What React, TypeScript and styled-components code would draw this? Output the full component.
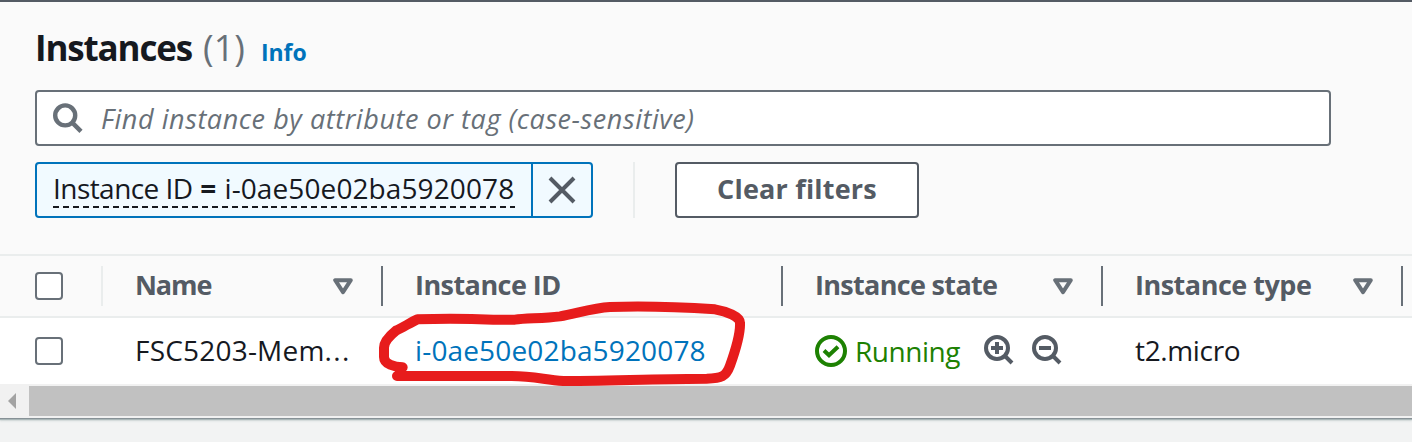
import React from "react";
import styled, { createGlobalStyle, css } from "styled-components";

const color = {
  ink: "#16191f",
  slate: "#545b64",
  grey: "#687078",
  blue: "#0073bb",
  green: "#1d8102",
  line: "#eaeded",
};

const Global = createGlobalStyle`
  * { box-sizing: border-box; }
  body {
    margin: 0;
    background: #f2f3f3;
    font-family: "Open Sans", "Noto Sans", sans-serif;
    font-size: 28px;
    color: ${color.ink};
    overflow: hidden;
  }
`;

const Page = styled.div`
  position: relative;
  width: 1412px;
  height: 442px;
  overflow: hidden;
`;

const Panel = styled.section`
  background: #fafafa;
  border-top: 2px solid ${color.slate};
  border-bottom: 1px solid #879196;
  box-shadow: 0 1px 1px #aab7b8, 0 2px 2px #d5dbdb;
`;

const Label = styled.span<{ $track?: number }>`
  white-space: nowrap;
  letter-spacing: ${(p) => p.$track ?? 0}px;
`;

const Toolbar = styled.header`
  height: 252px;
  padding: 22px 35px 0;
`;

const Heading = styled.div`
  display: flex;
  align-items: baseline;
  height: 66px;
  line-height: 48px;
`;

const Title = styled.h2`
  margin: 0;
  font-size: 35px;
  font-weight: 700;
`;

const Count = styled.span`
  margin-left: 11px;
  font-size: 36px;
  color: ${color.grey};
`;

const InfoLink = styled.a`
  margin-left: 16px;
  font-size: 23px;
  font-weight: 700;
  color: ${color.blue};
`;

const SearchBox = styled.div`
  display: flex;
  align-items: center;
  gap: 18px;
  width: 1296px;
  height: 56px;
  padding: 0 16px;
  border: 2px solid ${color.grey};
  border-radius: 4px;
  background: #fff;
  color: ${color.grey};
  font-size: 27px;
  font-style: italic;
`;

const Filters = styled.div`
  display: flex;
  height: 56px;
  margin-top: 16px;
`;

const Token = styled.div`
  display: flex;
  width: 558px;
  border: 2px solid ${color.blue};
  border-radius: 4px;
  background: #f1faff;
`;

const TokenText = styled.div`
  display: flex;
  width: 494px;
  padding: 7px 0 0 16px;
`;

const Dashed = styled.div`
  width: 462px;
  height: 37px;
  line-height: 35px;
  white-space: nowrap;
  background: repeating-linear-gradient(
      90deg,
      ${color.ink} 0 6px,
      transparent 6px 9.93px
    )
    left bottom / 100% 2px no-repeat;
`;

const Operator = styled.span`
  margin: 0 2px 0 1px;
  font-weight: 700;
`;

const Dismiss = styled.button`
  display: flex;
  align-items: center;
  justify-content: center;
  flex: 1;
  padding: 0;
  border: 0;
  border-left: 2px solid ${color.blue};
  background: none;
`;

const Divider = styled.div`
  width: 2px;
  margin: 0 40px;
  background: ${color.line};
`;

const ClearButton = styled.button`
  width: 244px;
  padding: 0 0 3px;
  border: 2px solid ${color.slate};
  border-radius: 4px;
  background: #fff;
  font: 700 27px "Open Sans", sans-serif;
  color: ${color.slate};
`;

const Row = styled.div<{ $head?: boolean }>`
  display: grid;
  grid-template-columns: 103px 280px 400px 320px 300px 9px;
  align-items: center;
  ${(p) =>
    p.$head
      ? css`
          height: 64px;
          border-top: 2px solid ${color.line};
          border-bottom: 2px solid ${color.line};
          color: ${color.slate};
          font-size: 27px;
          font-weight: 700;
        `
      : css`
          height: 66px;
          background: #fff;
        `}
`;

const Cell = styled.div<{ $head?: boolean; $edge?: string }>`
  display: flex;
  align-items: center;
  height: 40px;
  padding: 0 28px 0 32px;
  line-height: 38px;
  border-right: 2px solid ${(p) => p.$edge ?? "transparent"};
  ${(p) => p.$head && "justify-content: space-between;"}

  > ${Label}, > a {
    padding-bottom: ${(p) => (p.$head ? 2 : 3)}px;
  }
`;

const CheckCell = styled(Cell)`
  padding: 0 0 0 35px;
`;

const Checkbox = styled.div`
  width: 28px;
  height: 28px;
  border: 2px solid ${color.grey};
  border-radius: 4px;
  background: #fff;
`;

const IdLink = styled.a`
  color: ${color.blue};
`;

const Status = styled.div`
  display: flex;
  align-items: center;
  gap: 8px;
  color: ${color.green};
`;

const ZoomGroup = styled.div`
  display: flex;
  gap: 18px;
  margin-left: 24px;
  margin-top: -3px;
`;

const Scrollbar = styled.div`
  display: flex;
  align-items: center;
  height: 34px;
  padding: 2px 0;
  background: #f1f1f1;
`;

const ScrollArrow = styled.div`
  display: flex;
  justify-content: center;
  width: 29px;
  padding-right: 5px;
`;

const Thumb = styled.div`
  flex: 1;
  height: 30px;
  background: #c1c1c1;
`;

const Marker = styled.svg`
  position: absolute;
  left: 360px;
  top: 245px;
  pointer-events: none;
`;

const SearchIcon = () => (
  <svg width="30" height="30" viewBox="0 0 30 30" fill="none" stroke={color.grey} strokeWidth="4.4">
    <circle cx="12.2" cy="12.4" r="10" />
    <path d="M19 19.4l9 9" />
  </svg>
);

const CloseIcon = () => (
  <svg width="28" height="28" viewBox="0 0 28 28" stroke={color.slate} strokeWidth="4">
    <path d="M2 2l24 24M26 2L2 26" />
  </svg>
);

const SortIcon = () => (
  <svg width="20" height="17" viewBox="0 0 20 17" fill="none" stroke={color.grey} strokeWidth="4" strokeLinejoin="round">
    <path d="M2.2 2.2h15.6L10 14.2z" />
  </svg>
);

const CheckIcon = () => (
  <svg width="32" height="32" viewBox="0 0 32 32" fill="none" stroke={color.green} strokeWidth="4">
    <circle cx="16" cy="16" r="14" />
    <path d="M9 15.5l5 4.8L23 11.8" />
  </svg>
);

const ZoomIcon = ({ plus }: { plus?: boolean }) => (
  <svg width="30" height="30" viewBox="0 0 30 30" fill="none" stroke={color.slate} strokeWidth="4">
    <circle cx="13" cy="13" r="11" />
    <path d="M21 21l7 7M7 13h12" />
    {plus && <path d="M13 7v12" />}
  </svg>
);

export default function App() {
  return (
    <Page>
      <Global />
      <Panel>
        <Toolbar>
          <Heading>
            <Title><Label $track={-1.15}>Instances</Label></Title>
            <Count><Label>(1)</Label></Count>
            <InfoLink><Label>Info</Label></InfoLink>
          </Heading>
          <SearchBox>
            <SearchIcon />
            <Label $track={0.56}>Find instance by attribute or tag (case-sensitive)</Label>
          </SearchBox>
          <Filters>
            <Token>
              <TokenText>
                <Dashed>
                  <Label $track={-0.55}>Instance ID <Operator>=</Operator> </Label>
                  <Label $track={0.1}>i-0ae50e02ba5920078</Label>
                </Dashed>
              </TokenText>
              <Dismiss aria-label="Remove filter"><CloseIcon /></Dismiss>
            </Token>
            <Divider />
            <ClearButton><Label $track={0.2}>Clear filters</Label></ClearButton>
          </Filters>
        </Toolbar>
        <Row $head>
          <CheckCell $edge={color.line}><Checkbox /></CheckCell>
          <Cell $head $edge={color.grey}><Label $track={-1.1}>Name</Label><SortIcon /></Cell>
          <Cell $head $edge={color.grey}><Label $track={-0.55}>Instance ID</Label></Cell>
          <Cell $head $edge={color.grey}><Label $track={-0.68}>Instance state</Label><SortIcon /></Cell>
          <Cell $head $edge={color.grey}><Label $track={-0.5}>Instance type</Label><SortIcon /></Cell>
        </Row>
        <Row>
          <CheckCell><Checkbox /></CheckCell>
          <Cell><Label $track={0.2}>FSC5203-Mem<Label $track={1.4}>...</Label></Label></Cell>
          <Cell><IdLink><Label $track={0.15}>i-0ae50e02ba5920078</Label></IdLink></Cell>
          <Cell>
            <Status><CheckIcon /><Label $track={-0.45}>Running</Label></Status>
            <ZoomGroup><ZoomIcon plus /><ZoomIcon /></ZoomGroup>
          </Cell>
          <Cell><Label $track={-0.35}>t2.micro</Label></Cell>
        </Row>
        <Scrollbar>
          <ScrollArrow>
            <svg width="8" height="16" viewBox="0 0 8 16"><path d="M8 0v16L0 8z" fill="#a3a3a3" /></svg>
          </ScrollArrow>
          <Thumb />
        </Scrollbar>
      </Panel>
      <Marker width="400" height="197" viewBox="0 0 1200 591" fill="none" stroke="#e71c1c" strokeWidth="30" strokeLinecap="round" strokeLinejoin="round">
        <path d="M128 367C104 366 72 358 72 336V308C72 290 92 270 108 257C130 247 150 233 172 223C240 221 320 221 400 224H465C500 219 550 221 600 214C650 205 700 189 750 186C860 182 960 186 1065 193C1100 199 1140 215 1140 233C1142 270 1125 320 1110 362C1098 395 1085 400 1040 401C900 401 780 408 610 408C550 403 520 394 455 393H111" />
      </Marker>
    </Page>
  );
}
